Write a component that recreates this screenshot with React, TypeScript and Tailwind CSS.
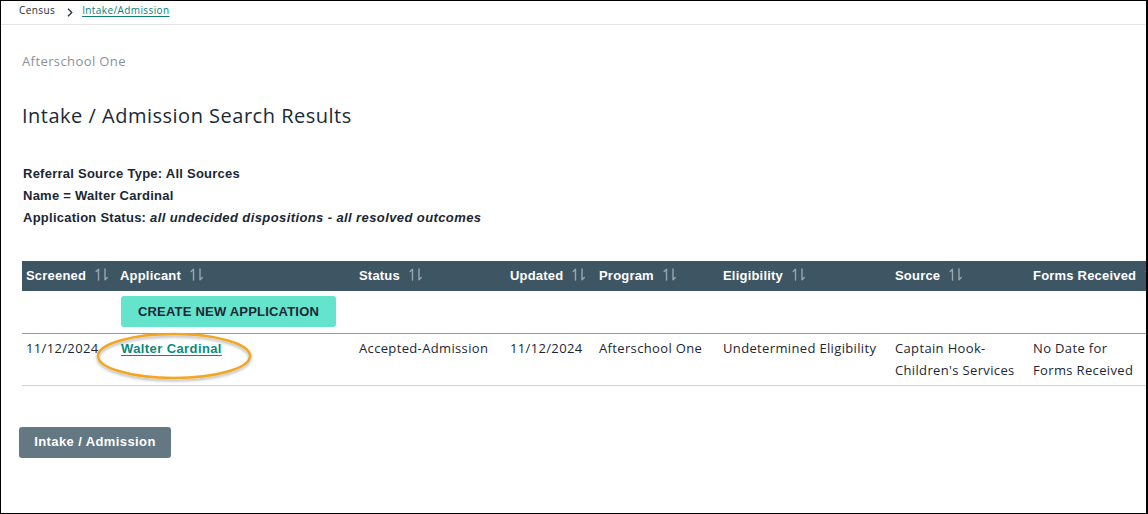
import React from "react";

const SortIcon = () => (
  <svg width="14" height="13" viewBox="0 0 14 13" className="inline-block ml-[9px] align-[-1px]" fill="none" stroke="#9aa6ae" strokeWidth="1.4" strokeLinecap="round">
    <path d="M3.5 12V1.2M1.2 3.5L3.5 1.2" />
    <path d="M10 1V11.8M12.3 9.5L10 11.8" />
  </svg>
);

const cols = [
  { label: "Screened", w: 94, sort: true },
  { label: "Applicant", w: 239, sort: true },
  { label: "Status", w: 151, sort: true },
  { label: "Updated", w: 89, sort: true },
  { label: "Program", w: 124, sort: true },
  { label: "Eligibility", w: 172, sort: true },
  { label: "Source", w: 138, sort: true },
  { label: "Forms Received", w: 140, sort: true },
];

const OPEN = { fontFamily: '"Open Sans", "Liberation Sans", sans-serif' };

export default function App() {
  return (
    <div
      className="w-[1148px] h-[514px] box-border border border-black border-r-2 bg-white overflow-hidden relative"
      style={{ fontFamily: '"Liberation Sans", Arial, sans-serif' }}
    >
      <div className="h-[24px] border-b border-[#e6e6e6] flex items-start pl-[18px] pt-[2px] text-[10px] text-[#1d2b36] tracking-[0.4px]" style={OPEN}>
        <span>Census</span>
        <span className="ml-[12px] mr-[9px] pt-[1px]">
          <svg width="6" height="9" viewBox="0 0 6 9" className="inline-block" fill="none" stroke="#1d2b36" strokeWidth="1.2">
            <path d="M1 0.8L4.8 4.5L1 8.2" />
          </svg>
        </span>
        <span className="text-[#0b7f74] underline underline-offset-2">Intake/Admission</span>
      </div>

      <div className="pl-[21px]">
        <div className="mt-[27px] text-[13px] leading-[18px] text-[#8a939b] tracking-[0.4px]" style={OPEN}>Afterschool One</div>
        <h1 className="mt-[32px] text-[20px] leading-[28px] text-[#1a2a36] tracking-[0.5px]" style={OPEN}>Intake / Admission Search Results</h1>
        <div className="mt-[33px] text-[13px] leading-[22px] font-bold text-[#1b2733] pl-[1px] tracking-[0.25px]">
          <div>Referral Source Type: All Sources</div>
          <div>Name = Walter Cardinal</div>
          <div>
            Application Status: <span className="italic tracking-[0.4px]">all undecided dispositions - all resolved outcomes</span>
          </div>
        </div>

        <div className="mt-[32px] relative">
          <table className="table-fixed border-collapse w-[1147px] text-[13px] text-[#1b2733]">
            <colgroup>
              {cols.map((c) => (
                <col key={c.label} style={{ width: c.w }} />
              ))}
            </colgroup>
            <thead>
              <tr className="bg-[#3e5563] h-[30px]">
                {cols.map((c) => (
                  <th key={c.label} className="text-left font-bold text-white pl-[4px] whitespace-nowrap tracking-[0.2px]">
                    {c.label}
                    {c.sort && <SortIcon />}
                  </th>
                ))}
              </tr>
            </thead>
            <tbody>
              <tr className="h-[42px] border-b border-[#8f9ca5]">
                <td></td>
                <td className="pl-[5px] align-middle">
                  <button className="w-[215px] h-[31px] rounded-[3px] bg-[#64e3cd] text-[13px] font-bold text-[#1b2733] tracking-[0.2px]">
                    CREATE NEW APPLICATION
                  </button>
                </td>
                <td colSpan={6}></td>
              </tr>
              <tr className="h-[52px] border-b border-[#cdd2d6] leading-[22px] align-top tracking-[0.35px]" style={OPEN}>
                <td className="pl-[4px] pt-[3px]">11/12/2024</td>
                <td className="pl-[5px] pt-[3px]">
                  <a
                    className="text-[#0b8a7c] font-bold underline underline-offset-2 tracking-[0.4px]"
                    style={{ fontFamily: '"Liberation Sans", Arial, sans-serif' }}
                  >
                    Walter Cardinal
                  </a>
                </td>
                <td className="pl-[4px] pt-[3px]">Accepted-Admission</td>
                <td className="pl-[4px] pt-[3px]">11/12/2024</td>
                <td className="pl-[4px] pt-[3px]">Afterschool One</td>
                <td className="pl-[4px] pt-[3px]">Undetermined Eligibility</td>
                <td className="pl-[4px] pt-[3px]">
                  Captain Hook-
                  <br />
                  Children's Services
                </td>
                <td className="pl-[4px] pt-[3px]">
                  No Date for
                  <br />
                  Forms Received
                </td>
              </tr>
            </tbody>
          </table>

          <svg
            className="absolute left-[72px] top-[70px] pointer-events-none"
            width="164"
            height="56"
            viewBox="0 0 164 56"
          >
            <defs>
              <filter id="sh" x="-10%" y="-20%" width="120%" height="150%">
                <feDropShadow dx="0" dy="2" stdDeviation="1.5" floodColor="#000" floodOpacity="0.3" />
              </filter>
            </defs>
            <ellipse cx="80" cy="25" rx="76" ry="22" fill="none" stroke="#f2a623" strokeWidth="2.5" filter="url(#sh)" />
          </svg>
        </div>

        <button className="mt-[41px] ml-[-3px] w-[152px] h-[31px] rounded-[3px] bg-[#647883] text-white font-bold text-[13px] tracking-[0.4px]">
          Intake / Admission
        </button>
      </div>
    </div>
  );
}
